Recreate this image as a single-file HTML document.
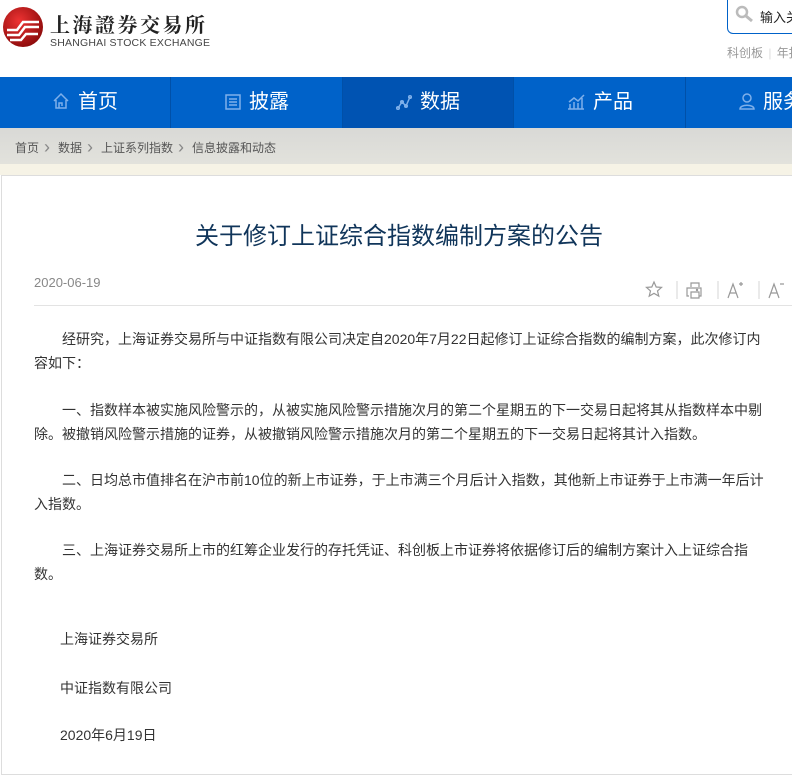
<!DOCTYPE html>
<html><head><meta charset="utf-8"><style>
*{margin:0;padding:0;box-sizing:border-box}
body{width:792px;height:757px;overflow:hidden;background:#fff;font-family:"Liberation Sans","Noto Sans CJK SC",sans-serif;position:relative}
.a{position:absolute;white-space:nowrap}
.nav{position:absolute;left:0;top:77px;width:792px;height:51px;background:#0062c9}
.tab{position:absolute;top:0;height:51px;width:171px;border-right:1px solid #0050a8;color:#fff;font-size:20px;line-height:51px;text-align:center}
.tab svg{vertical-align:-2px;margin-right:8px}
.crumb{position:absolute;left:0;top:128px;width:792px;height:36px;background:linear-gradient(#d9d9d6,#e2e2dc);font-size:12px;color:#555;line-height:38px;padding-left:15px}
.crumb span{color:#888;margin:0 5px;font-size:18px;display:inline-block;width:9px;vertical-align:-1px;font-weight:lighter}
.card{position:absolute;left:1px;top:175px;width:800px;height:600px;border:1px solid #ddd;border-right:none;background:#fff}
.p{position:absolute;left:34px;font-size:14px;color:#333;line-height:24px;white-space:nowrap}
</style></head><body>
<svg class="a" style="left:2px;top:6px" width="42" height="42" viewBox="0 0 42 42"><defs><radialGradient id="g" cx="0.4" cy="0.35" r="0.7"><stop offset="0" stop-color="#e33"/><stop offset="1" stop-color="#8a0a0a"/></radialGradient></defs><circle cx="21" cy="21" r="20" fill="url(#g)"/><path d="M5 24h10l6-8h16M5 29h12l6-8h14M8 34h11l5-6h12" stroke="#fff" stroke-width="2.5" fill="none"/></svg>
<div class="a" style="left:50px;top:9px;font-size:20px;color:#222;letter-spacing:2.5px;font-family:'Noto Serif CJK SC',serif;font-weight:bold">上海證券交易所</div>
<div class="a" style="left:50px;top:37px;font-size:10.5px;color:#444;letter-spacing:0.2px">SHANGHAI STOCK EXCHANGE</div>
<div class="a" style="left:727px;top:0;width:80px;height:34px;border:1px solid #0062c9;border-top:none;border-radius:0 0 0 6px"></div>
<svg class="a" style="left:735px;top:5px" width="20" height="18"><circle cx="7" cy="7" r="5" stroke="#bbb" stroke-width="2.5" fill="none"/><path d="M11 11l6 5" stroke="#bbb" stroke-width="3"/></svg>
<div class="a" style="left:760px;top:7px;font-size:13px;color:#222">输入关</div>
<div class="a" style="left:727px;top:44px;font-size:12px;color:#999">科创板 <span style="color:#ddd;margin:0 2px">|</span> 年报</div>
<div class="nav">
<div class="tab" style="left:0"><svg width="18" height="18" viewBox="0 0 18 18" fill="none" stroke="#7fb0ea" stroke-width="1.5"><path d="M2 9L9 2l7 7M4 8v8h10V8M7 16v-5h3v3"/></svg>首页</div>
<div class="tab" style="left:172px"><svg width="16" height="16" viewBox="0 0 16 16" fill="none" stroke="#7fb0ea" stroke-width="1.5"><rect x="1" y="1" width="14" height="14"/><path d="M4 5h8M4 8h8M4 11h8"/></svg>披露</div>
<div class="tab" style="left:343px;background:#0053b2"><svg width="16" height="16" viewBox="0 0 16 16" fill="none" stroke="#7fb0ea" stroke-width="1.5"><path d="M2 14l4-6 4 4 4-9"/><circle cx="2" cy="14" r="1.3"/><circle cx="6" cy="8" r="1.3"/><circle cx="10" cy="12" r="1.3"/><circle cx="14" cy="3" r="1.3"/></svg>数据</div>
<div class="tab" style="left:515px"><svg width="18" height="16" viewBox="0 0 18 16" fill="none" stroke="#7fb0ea" stroke-width="1.5"><path d="M1 15h16M3 15V10M7 15V8M11 15V9M15 15V4M2 8l5-4 4 3 6-6"/></svg>产品</div>
<div class="tab" style="left:687px;text-align:left;padding-left:52px"><svg width="16" height="18" viewBox="0 0 16 18" fill="none" stroke="#7fb0ea" stroke-width="1.5"><circle cx="8" cy="6" r="4"/><path d="M1 17c0-5 14-5 14 0z"/></svg>服务</div>
</div>
<div class="crumb">首页<span>›</span>数据<span>›</span>上证系列指数<span>›</span>信息披露和动态</div>
<div class="a" style="left:0;top:164px;width:792px;height:11px;background:#f6f3e6"></div>
<div class="card"></div>
<div class="a" style="left:195px;top:216px;font-size:24px;color:#10355a">关于修订上证综合指数编制方案的公告</div>
<div class="a" style="left:34px;top:275px;font-size:13px;color:#888">2020-06-19</div>
<svg class="a" style="left:645px;top:280px" width="147" height="20" viewBox="0 0 147 20" fill="none" stroke="#999" stroke-width="1.2">
<path d="M9 2l2.2 5 5.3.4-4 3.5 1.3 5.2L9 13.3 4.2 16.1l1.3-5.2-4-3.5 5.3-.4z"/>
<path d="M32 1v18M73 1v18M114 1v18" stroke="#ddd"/>
<path d="M46 7V3h8v4M44 16h-2V8h14v8h-2M46 12h8v6h-8z"/><circle cx="52" cy="10" r="0.6"/>
<path d="M83 18l5-14 5 14M85 13h6M94 4h4M96 2v4"/>
<path d="M124 18l5-14 5 14M126 13h6M135 4h4"/>
</svg>
<div class="a" style="left:34px;top:305px;width:758px;height:1px;background:#e3e3e3"></div>
<div class="p" style="top:327px">　　经研究，上海证券交易所与中证指数有限公司决定自2020年7月22日起修订上证综合指数的编制方案，此次修订内<br>容如下：</div>
<div class="p" style="top:398px">　　一、指数样本被实施风险警示的，从被实施风险警示措施次月的第二个星期五的下一交易日起将其从指数样本中剔<br>除。被撤销风险警示措施的证券，从被撤销风险警示措施次月的第二个星期五的下一交易日起将其计入指数。</div>
<div class="p" style="top:468px">　　二、日均总市值排名在沪市前10位的新上市证券，于上市满三个月后计入指数，其他新上市证券于上市满一年后计<br>入指数。</div>
<div class="p" style="top:538px">　　三、上海证券交易所上市的红筹企业发行的存托凭证、科创板上市证券将依据修订后的编制方案计入上证综合指<br>数。</div>
<div class="p" style="top:627px;left:60px">上海证券交易所</div>
<div class="p" style="top:676px;left:60px">中证指数有限公司</div>
<div class="p" style="top:723px;left:60px">2020年6月19日</div>
</body></html>
